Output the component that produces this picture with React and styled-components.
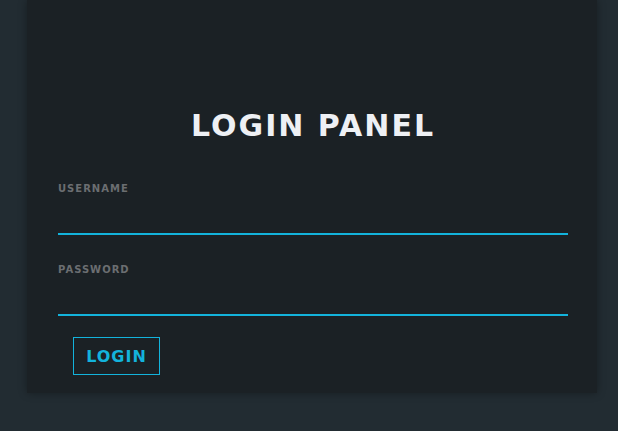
import React from 'react';
import styled, { createGlobalStyle } from 'styled-components';

const GlobalStyle = createGlobalStyle`
  html, body {
    margin: 0;
    padding: 0;
    background: #222c32;
    font-family: "DejaVu Sans", Verdana, sans-serif;
  }
`

const Page = styled.div`
  width: 618px;
  height: 431px;
  overflow: hidden;
`

const Panel = styled.div`
  width: 570px;
  margin-left: 27px;
  height: 393px;
  box-sizing: border-box;
  padding: 108px 29px 0 31px;
  background: #1b2125;
  box-shadow: 0 0 8px rgba(0, 0, 0, 0.35);
`

const Title = styled.h1`
  margin: 0 0 39px;
  text-align: center;
  color: #eef0f4;
  font-size: 30px;
  font-weight: 700;
  letter-spacing: 2px;
  line-height: 36px;
`

const Field = styled.div`
  display: flex;
  flex-direction: column;
  margin-bottom: ${p => p.$last ? '21px' : '29px'};
`

const Label = styled.label`
  color: #6b6e71;
  font-size: 10px;
  font-weight: 700;
  letter-spacing: 1px;
  line-height: 12px;
`

const Input = styled.input`
  height: 34px;
  margin-top: 4px;
  padding: 0;
  border: none;
  border-bottom: 2px solid #13b3dc;
  background: transparent;
  color: #eef0f4;
  outline: none;
`

const Button = styled.button`
  margin: 0 0 0 15px;
  width: 87px;
  height: 38px;
  background: transparent;
  border: 1px solid #13b3dc;
  color: #13b3dc;
  font-family: inherit;
  font-size: 16px;
  font-weight: 700;
  letter-spacing: 1px;
`

export default function App() {
  return (
    <Page>
      <GlobalStyle />
      <Panel>
        <Title>LOGIN PANEL</Title>
        <Field>
          <Label>USERNAME</Label>
          <Input type="text" />
        </Field>
        <Field $last>
          <Label>PASSWORD</Label>
          <Input type="password" />
        </Field>
        <Button>LOGIN</Button>
      </Panel>
    </Page>
  )
}
